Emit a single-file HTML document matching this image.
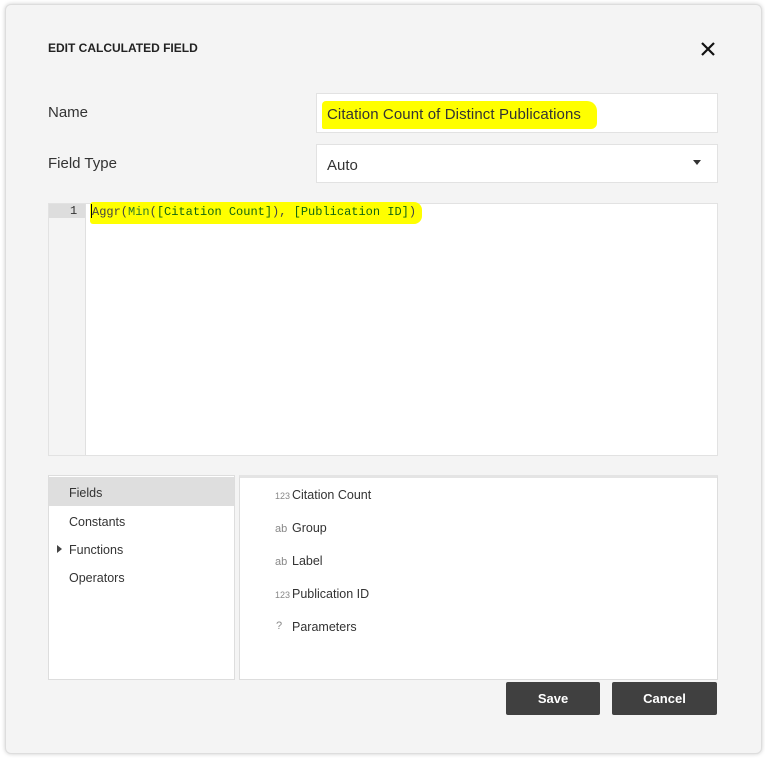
<html><head><style>
body{margin:0;width:765px;height:758px;background:#fff;font-family:"Liberation Sans",sans-serif;position:relative;overflow:hidden}
.a{position:absolute}
.dlg{left:5px;top:4px;width:755px;height:748px;background:#f4f4f4;border:1px solid #ddd;border-radius:6px;box-shadow:0 0 4px rgba(0,0,0,.2)}
.lbl{font-size:15px;color:#333}
.inp{background:#fff;border:1px solid #e2e2e2;box-sizing:border-box}
.hl{background:#ffff00}
.mono{font-family:"Liberation Mono",monospace;font-size:12px}
.li{font-size:12.5px;color:#333}
.btn{background:#404040;color:#fff;font-weight:bold;font-size:13px;text-align:center;line-height:33px;border-radius:2px}
.ic{font-size:9px;color:#888}
</style></head><body>
<div class="a dlg"></div>
<div class="a" style="left:48px;top:41px;font-size:12px;font-weight:bold;color:#222">EDIT CALCULATED FIELD</div>
<svg class="a" style="left:700px;top:41px" width="16" height="16"><path d="M2 2L14 14M14 2L2 14" stroke="#111" stroke-width="2.2"/></svg>
<div class="a lbl" style="left:48px;top:104px">Name</div>
<div class="a lbl" style="left:48px;top:155px">Field Type</div>
<div class="a inp" style="left:316px;top:93px;width:402px;height:40px"></div>
<div class="a hl" style="left:322px;top:101px;width:275px;height:28px;border-radius:4px 10px 6px 2px"></div>
<div class="a lbl" style="left:327px;top:106px;font-size:15px;letter-spacing:0.1px">Citation Count of Distinct Publications</div>
<div class="a inp" style="left:316px;top:144px;width:402px;height:39px"></div>
<div class="a lbl" style="left:327px;top:157px;font-size:15px">Auto</div>
<svg class="a" style="left:693px;top:160px" width="8" height="5"><path d="M0 0H8L4 5Z" fill="#333"/></svg>
<div class="a inp" style="left:48px;top:203px;width:670px;height:253px"></div>
<div class="a" style="left:49px;top:204px;width:36px;height:251px;background:#f4f4f4;border-right:1px solid #e0e0e0"></div>
<div class="a" style="left:49px;top:204px;width:36px;height:14px;background:#ddd"></div>
<div class="a mono" style="left:70px;top:204px;color:#333">1</div>
<div class="a hl" style="left:90px;top:202px;width:332px;height:22px;border-radius:3px 8px 8px 3px"></div>
<div class="a" style="left:91px;top:204px;width:1px;height:14px;background:#000"></div>
<div class="a mono" style="left:92px;top:205px;color:#444;letter-spacing:0px">Aggr(<span style="color:#2a7a2a">Min</span>(<span style="color:#116611">[Citation Count]</span>), <span style="color:#116611">[Publication ID]</span>)</div>
<div class="a" style="left:48px;top:475px;width:187px;height:205px;background:#fff;border:1px solid #ddd;box-sizing:border-box"></div>
<div class="a" style="left:49px;top:477px;width:185px;height:29px;background:#dedede"></div>
<div class="a li" style="left:69px;top:486px">Fields</div>
<div class="a li" style="left:69px;top:515px">Constants</div>
<svg class="a" style="left:57px;top:545px" width="5" height="8"><path d="M0 0L5 4L0 8Z" fill="#444"/></svg>
<div class="a li" style="left:69px;top:543px">Functions</div>
<div class="a li" style="left:69px;top:571px">Operators</div>
<div class="a" style="left:239px;top:475px;width:479px;height:205px;background:#fff;border:1px solid #ddd;border-top:3px solid #e4e4e4;box-sizing:border-box"></div>
<div class="a ic" style="left:275px;top:491px">123</div><div class="a li" style="left:292px;top:488px">Citation Count</div>
<div class="a ic" style="left:275px;top:523px;font-size:11px">ab</div><div class="a li" style="left:292px;top:521px">Group</div>
<div class="a ic" style="left:275px;top:556px;font-size:11px">ab</div><div class="a li" style="left:292px;top:554px">Label</div>
<div class="a ic" style="left:275px;top:590px">123</div><div class="a li" style="left:292px;top:587px">Publication ID</div>
<div class="a ic" style="left:276px;top:620px;font-size:11px">?</div><div class="a li" style="left:292px;top:620px">Parameters</div>
<div class="a btn" style="left:506px;top:682px;width:94px;height:33px">Save</div>
<div class="a btn" style="left:612px;top:682px;width:105px;height:33px">Cancel</div>
</body></html>
